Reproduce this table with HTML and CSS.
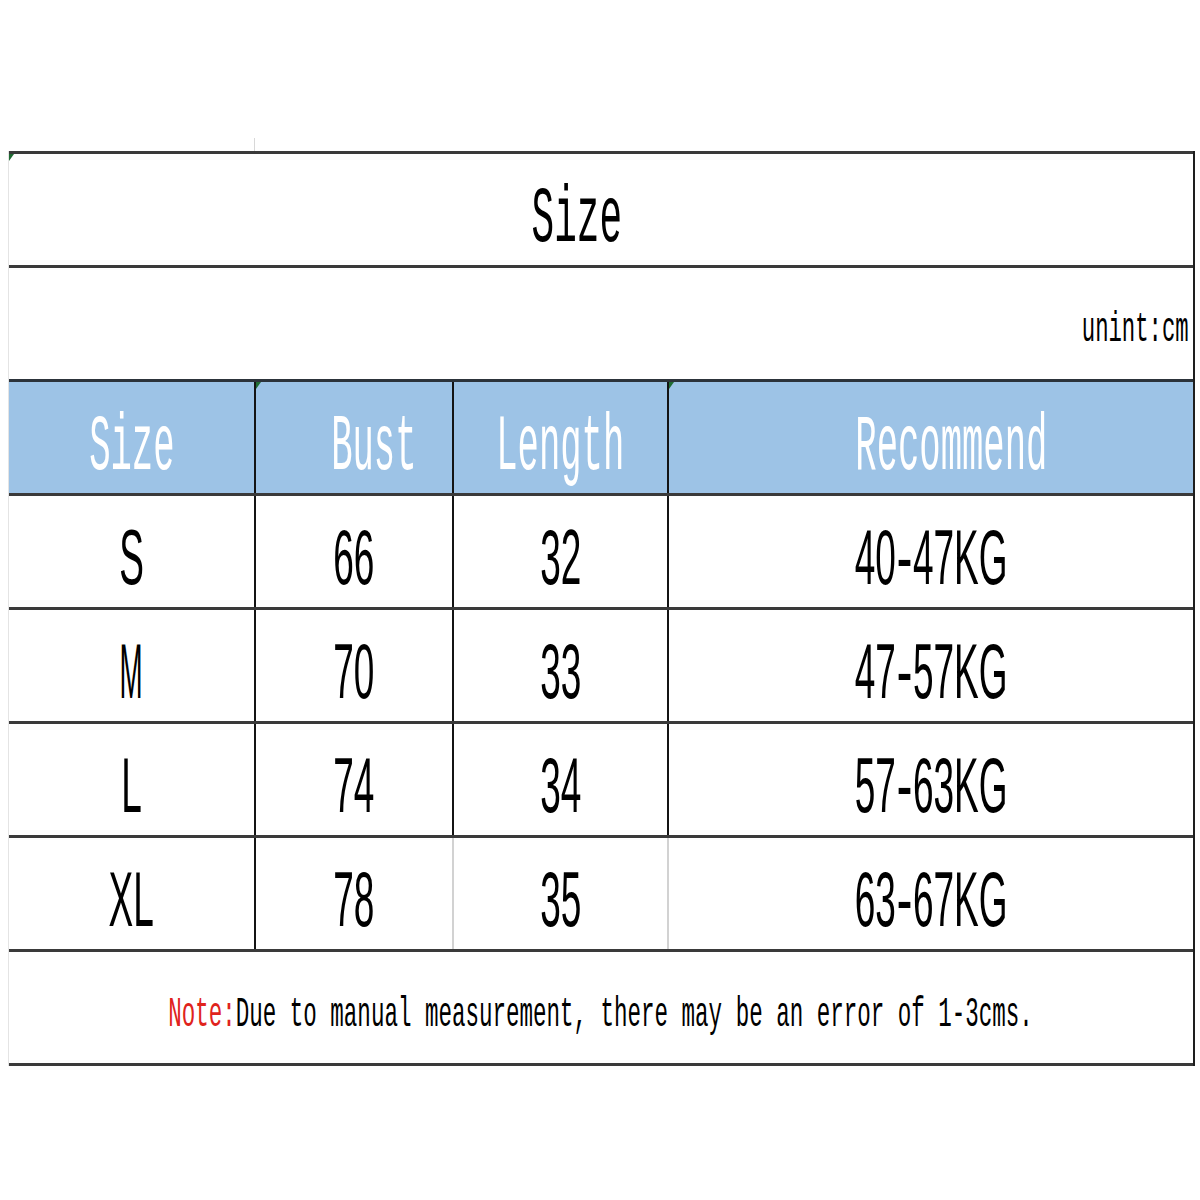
FILE: index.html
```html
<!DOCTYPE html>
<html>
<head>
<meta charset="utf-8">
<link rel="stylesheet" href="styles.css">
</head>
<body>
<div class="tick"></div>
<div class="sheet">
  <div class="row title-row">
    <div class="cell title"><span class="flag"></span><span class="txt">Size</span></div>
  </div>
  <div class="row unit-row">
    <div class="cell unit"><span class="txt">unint:cm</span></div>
  </div>
  <div class="row grid head">
    <div class="cell"><span class="txt">Size</span></div>
    <div class="cell shift"><span class="flag"></span><span class="txt">Bust</span></div>
    <div class="cell"><span class="txt">Length</span></div>
    <div class="cell shift"><span class="flag"></span><span class="txt">Recommend</span></div>
  </div>
  <div class="row grid data">
    <div class="cell"><span class="txt">S</span></div>
    <div class="cell"><span class="txt">66</span></div>
    <div class="cell"><span class="txt">32</span></div>
    <div class="cell"><span class="txt">40<span class="dash">-</span>47KG</span></div>
  </div>
  <div class="row grid data">
    <div class="cell"><span class="txt narrow">M</span></div>
    <div class="cell"><span class="txt">70</span></div>
    <div class="cell"><span class="txt">33</span></div>
    <div class="cell"><span class="txt">47<span class="dash">-</span>57KG</span></div>
  </div>
  <div class="row grid data">
    <div class="cell"><span class="txt">L</span></div>
    <div class="cell"><span class="txt">74</span></div>
    <div class="cell"><span class="txt">34</span></div>
    <div class="cell"><span class="txt">57<span class="dash">-</span>63KG</span></div>
  </div>
  <div class="row grid data xl">
    <div class="cell"><span class="txt">XL</span></div>
    <div class="cell"><span class="txt">78</span></div>
    <div class="cell"><span class="txt">35</span></div>
    <div class="cell"><span class="txt">63<span class="dash">-</span>67KG</span></div>
  </div>
  <div class="row note-row">
    <div class="cell note"><span class="txt"><span class="red">Note:</span>Due to manual measurement, there may be an error of 1-3cms.</span></div>
  </div>
</div>
</body>
</html>
```

FILE: styles.css
```css
body {
  margin: 0;
  background: #ffffff;
  font-family: "Liberation Mono", "DejaVu Sans Mono", monospace;
  color: #000000;
}

.tick {
  position: absolute;
  left: 254px;
  top: 138px;
  width: 1px;
  height: 13px;
  background: #d8d8d8;
}

.sheet {
  margin: 151px 0 0 8px;
  width: 1187px;
  box-sizing: border-box;
  border-left: 1px solid #e4e4e4;
  border-right: 2px solid #1e1e1e;
}

.row {
  height: 114px;
  box-sizing: border-box;
  border-top: 3px solid #3a3a3a;
  display: flex;
}

.note-row {
  height: 117px;
  border-bottom: 3px solid #3a3a3a;
}

.grid {
  display: grid;
  grid-template-columns: 245px 198px 215px 1fr;
}

.cell {
  flex: 1;
  display: flex;
  align-items: center;
  justify-content: center;
  padding-top: 12px;
  box-sizing: border-box;
  position: relative;
  overflow: hidden;
}

.grid .cell + .cell {
  border-left: 2px solid #141414;
}

.xl .cell:nth-child(n+3) {
  border-left-color: #d2d2d2;
}

.txt {
  display: inline-block;
  white-space: nowrap;
  line-height: 1;
  transform-origin: center;
}

.title {
  padding-top: 21px;
  padding-right: 48px;
}

.title .txt {
  font-size: 79px;
  transform: scaleX(0.477);
}

.unit {
  justify-content: flex-end;
  align-items: flex-end;
  padding-top: 0;
  padding-bottom: 28px;
  padding-right: 4px;
}

.unit .txt {
  font-size: 42px;
  transform: scaleX(0.53);
  transform-origin: right center;
}

.head {
  background: #9dc3e6;
  color: #ffffff;
  border-top-color: #2c333a;
}

.head .cell {
  padding-top: 21px;
}

.head .txt {
  font-size: 79px;
  transform: scaleX(0.45);
}

.head .shift {
  padding-left: 40px;
}

.data .txt {
  font-family: "Liberation Sans", Arial, sans-serif;
  font-size: 77px;
  transform: scaleX(0.48);
}

.data .txt.narrow {
  transform: scaleX(0.36);
}

.dash {
  display: inline-block;
  transform: scaleX(1.3);
  margin: 0 5px;
}

.note {
  padding-top: 15px;
}

.note .txt {
  font-size: 42px;
  transform: scaleX(0.536);
}

.red {
  color: #e0231c;
}

.flag {
  position: absolute;
  left: 0;
  top: 0;
  width: 0;
  height: 0;
  border-top: 7px solid #1f6b33;
  border-right: 5px solid transparent;
}
```
